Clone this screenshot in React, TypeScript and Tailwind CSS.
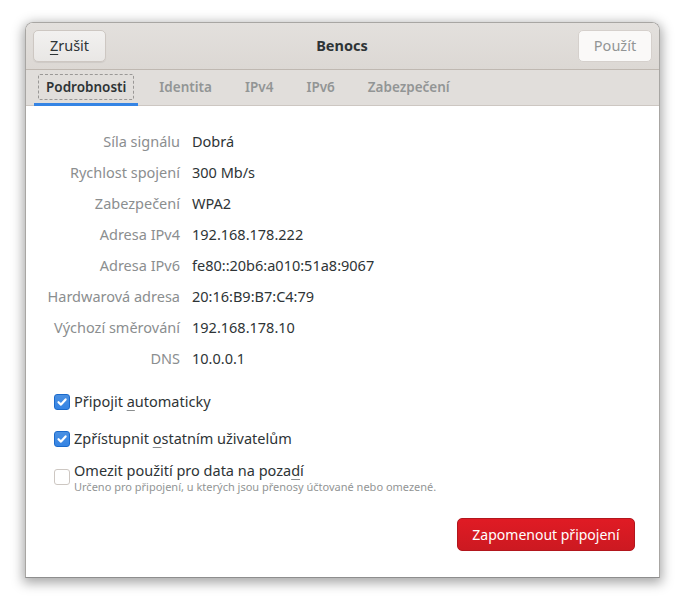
import React from "react";

const ROWS = [
  ["Síla signálu", "Dobrá"],
  ["Rychlost spojení", "300 Mb/s"],
  ["Zabezpečení", "WPA2"],
  ["Adresa IPv4", "192.168.178.222"],
  ["Adresa IPv6", "fe80::20b6:a010:51a8:9067"],
  ["Hardwarová adresa", "20:16:B9:B7:C4:79"],
  ["Výchozí směrování", "192.168.178.10"],
  ["DNS", "10.0.0.1"],
];

const TABS = ["Podrobnosti", "Identita", "IPv4", "IPv6", "Zabezpečení"];

function Check({ on }: { on: boolean }) {
  if (!on)
    return <div className="w-4 h-4 shrink-0 rounded-[3px] border border-[#cdc7c2] bg-white" />;
  return (
    <div className="w-4 h-4 shrink-0 rounded-[3px] border border-[#1b6acb] bg-gradient-to-b from-[#4a90e2] to-[#3584e4] flex items-center justify-center">
      <svg width="12" height="12" viewBox="0 0 12 12" fill="none">
        <path d="M2.5 6.2 L5 8.6 L9.6 3.4" stroke="white" strokeWidth="2.2" strokeLinecap="round" strokeLinejoin="round" />
      </svg>
    </div>
  );
}

const mn = "underline decoration-[#8b8e8f] underline-offset-[3px]";

export default function App() {
  return (
    <div className="w-[685px] h-[606px] bg-white pt-[22px] pl-[25px] font-['Noto_Sans',sans-serif] text-[14.5px] text-[#2e3436]">
      <div className="w-[635px] h-[556px] flex flex-col border border-[#a8a6a3] border-b-[#8e8e8e] rounded-t-[8px] overflow-hidden shadow-[0_3px_12px_2px_rgba(0,0,0,0.35)]">
        <header className="h-[47px] shrink-0 flex items-center justify-between px-[7px] bg-gradient-to-b from-[#e3e0dd] to-[#dcd8d4] border-b border-[#bfb8b1]">
          <button className="w-[73px] h-[32px] rounded-[5px] border border-[#cdc7c2] bg-gradient-to-b from-[#f2f1f0] to-[#e9e7e5] shadow-[0_1px_1px_rgba(0,0,0,0.07)]">
            <span className="underline underline-offset-[3px] decoration-[#2e3436]">Z</span>rušit
          </button>
          <span className="font-bold">Benocs</span>
          <button className="w-[74px] h-[32px] rounded-[5px] border border-[#d5d0cc] bg-[#faf9f8] text-[#929595]">Použít</button>
        </header>
        <nav className="h-[36px] shrink-0 flex items-stretch gap-[9px] px-[8px] bg-[#e1dedb] border-b border-[#cdc7c2] text-[13.5px] font-semibold">
          {TABS.map((t, i) => (
            <div
              key={t}
              className={
                i === 0
                  ? "relative px-[4px] pt-[4px] pb-[3px] text-[#2e3436] border-b-[3px] border-[#3584e4] mb-[-1px]"
                  : "px-[12px] flex items-center text-[#929595]"
              }
            >
              {i === 0 ? (
                <div className="h-full flex items-center px-[7px] border border-dashed border-[#9a9896] rounded-[2px]">{t}</div>
              ) : (
                t
              )}
            </div>
          ))}
        </nav>
        <main className="flex-1 bg-white flex flex-col">
          <div className="grid grid-cols-[154px_1fr] gap-x-[12px] pt-[20px]">
            {ROWS.map(([k, v]) => (
              <React.Fragment key={k}>
                <div className="h-[31px] flex items-center justify-end text-[#8b8e8f]">{k}</div>
                <div className="h-[31px] flex items-center">{v}</div>
              </React.Fragment>
            ))}
          </div>
          <div className="flex flex-col pl-[28px] pt-[20px]">
            <label className="flex items-center gap-[4px] h-[16px]">
              <Check on />
              <span>
                Připojit <span className={mn}>a</span>utomaticky
              </span>
            </label>
            <label className="flex items-center gap-[4px] h-[16px] mt-[21px]">
              <Check on />
              <span>
                Zpřístupnit <span className={mn}>o</span>statním uživatelům
              </span>
            </label>
            <label className="flex items-start gap-[4px] mt-[14px]">
              <div className="mt-[8px]">
                <Check on={false} />
              </div>
              <div className="flex flex-col">
                <span className="leading-[18px]">
                  Omezit použití pro data na poza<span className={mn}>d</span>í
                </span>
                <span className="text-[11px] text-[#929595] leading-[16px]">
                  Určeno pro připojení, u kterých jsou přenosy účtované nebo omezené.
                </span>
              </div>
            </label>
          </div>
          <div className="flex justify-end pr-[24px] mt-[23px]">
            <button className="w-[178px] h-[33px] rounded-[5px] border border-[#b2161d] bg-gradient-to-b from-[#e01b24] to-[#cc1921] text-white text-[14px]">
              Zapomenout připojení
            </button>
          </div>
        </main>
      </div>
    </div>
  );
}
